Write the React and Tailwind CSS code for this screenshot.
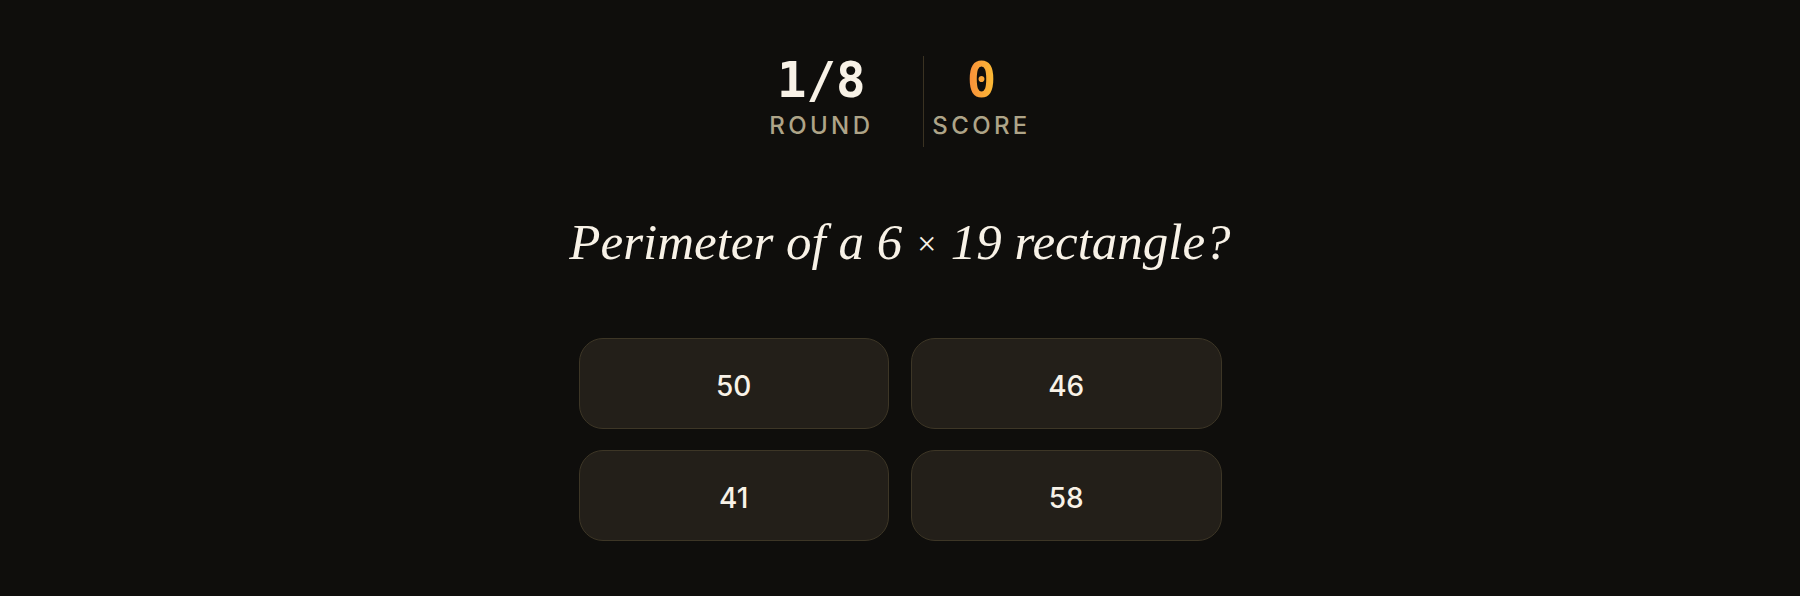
import { useState } from "react";

const ROUND = 1;
const TOTAL_ROUNDS = 8;
const OPTIONS = [50, 46, 41, 58];

function Stat({ value, label, valueClassName, className }) {
  return (
    <div className={`flex flex-col items-center ${className}`}>
      <div
        className={`text-[49px] leading-none font-bold font-['DejaVu_Sans_Mono',monospace] ${valueClassName}`}
      >
        {value}
      </div>
      <div className="mt-[9px] text-[24px] leading-none font-medium tracking-[0.14em] uppercase text-[#aea488] font-['Inter',sans-serif]">
        {label}
      </div>
    </div>
  );
}

export default function App() {
  const [score] = useState(0);

  return (
    <div className="min-h-[596px] bg-[#0f0e0c] flex flex-col items-center pt-[56px]">
      <div className="flex items-start">
        <Stat
          value={`${ROUND}/${TOTAL_ROUNDS}`}
          label="Round"
          valueClassName="text-[#f8f2e7]"
          className="pr-[50px]"
        />
        <div className="w-px h-[91px] bg-[#3a3222]" />
        <Stat
          value={score}
          label="Score"
          valueClassName="bg-gradient-to-r from-[#f98c3a] to-[#fbbd34] bg-clip-text text-transparent"
          className="pl-[8px]"
        />
      </div>

      <h1 className="mt-[70px] text-[51px] leading-none italic text-[#f8f2e7] font-['Liberation_Serif',serif]">
        Perimeter of a 6 <span className="text-[34px] align-[4px]">×</span> 19 rectangle?
      </h1>

      <div className="mt-[70px] grid grid-cols-2 gap-x-[22px] gap-y-[21px] w-[643px]">
        {OPTIONS.map((option) => (
          <button
            key={option}
            className="h-[91px] pt-[4px] rounded-[24px] border border-[#3d3626] bg-[#231f19] text-[28px] font-medium text-[#f8f2e7] font-['Inter',sans-serif] flex items-center justify-center"
          >
            {option}
          </button>
        ))}
      </div>
    </div>
  );
}
